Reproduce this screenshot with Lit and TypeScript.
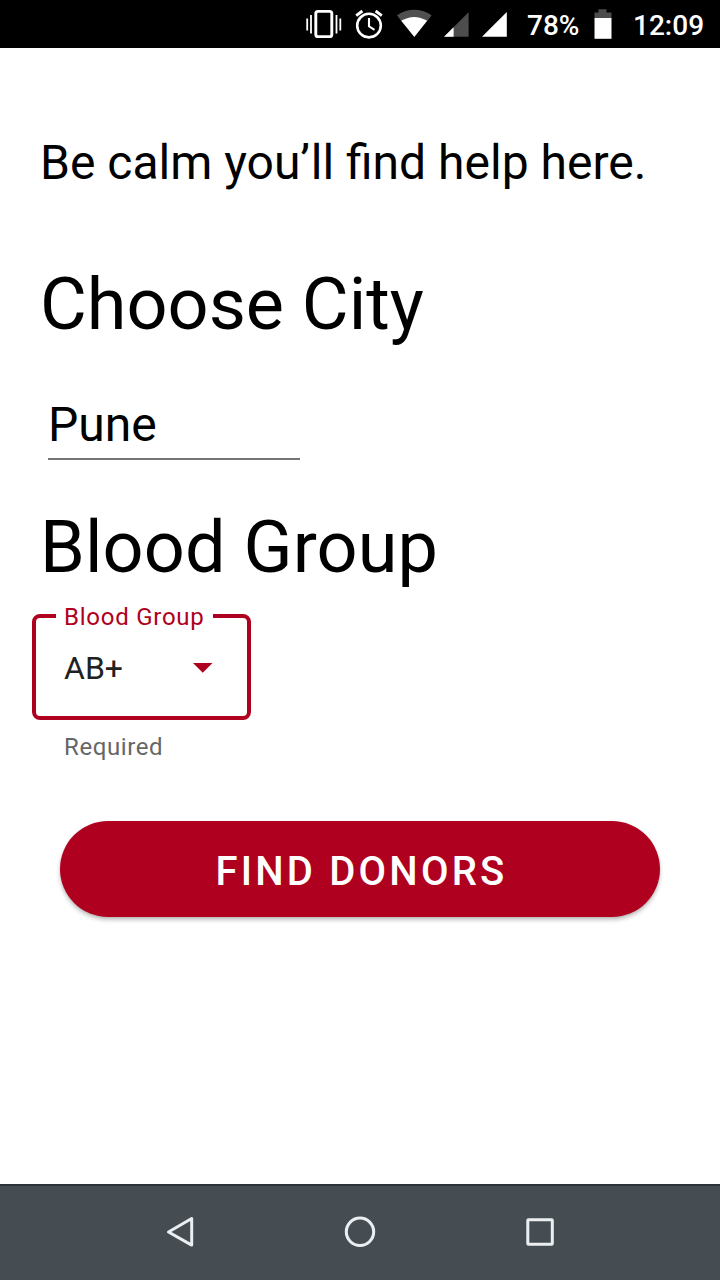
import { LitElement, html, css } from "lit";
import { customElement, property } from "lit/decorators.js";

@customElement("status-bar")
class StatusBar extends LitElement {
  static styles = css`
    :host { display: block; height: 48px; background: #000; }
    .bar { display: flex; height: 48px; align-items: center; justify-content: flex-end; padding-right: 16px; color: #fff; }
    .icons { width: 210px; height: 48px; margin-right: 17px; flex: none; }
    .battery { width: 18px; height: 48px; margin: 0 21px 0 15px; flex: none; }
    .text { font-size: 28px; font-weight: 500; line-height: 46px; padding-top: 3px; white-space: nowrap; }
    .level { width: 52px; }
    .clock { width: 71px; }
  `;
  render() {
    return html`<div class="bar">
      <svg class="icons" viewBox="300 0 210 48" fill="#fff">
        <g fill="none" stroke="#fff">
          <rect x="315.8" y="11.4" width="16" height="25.2" rx="2.2" stroke-width="2.9" />
          <path d="M311 15v18.500M336.500 15v18.500" stroke-width="1.800" />
          <path d="M307.200 18.500v12M340.300 18.500v12" stroke-width="1.800" />
          <circle cx="369" cy="25.6" r="11.800" stroke-width="2.600" />
          <path d="M369 18v8.300l5.500 3.600" stroke-width="2.100" />
          <path d="M356.200 15.600l6.200-4.600M381.800 15.600l-6.200-4.600" stroke-width="2.900" />
        </g>
        <path d="M397 15.200q17.300-10.800 34.600 0l-4.400 6q-13-7.600-25.800 0z" fill="#4f4f4f" />
        <path d="M401.200 20.800q13-7.800 26 0L414.300 37z" />
        <path d="M444 36.800L468.600 12.200v24.600z" fill="#4d4d4d" />
        <path d="M444 36.800l9.600-9.600v9.600z" />
        <path d="M482 36.800L506.800 12v24.800z" />
      </svg>
      <span class="text level">78%</span>
      <svg class="battery" viewBox="594 0 18 48">
        <path d="M594.500 18v-5.500h4V9.300h8v3.200h5V18z" fill="#4d4d4d" />
        <path d="M594.500 18h17v20.800h-17z" fill="#fff" />
      </svg>
      <span class="text clock">12:09</span>
    </div>`;
  }
}

@customElement("outlined-select")
class OutlinedSelect extends LitElement {
  @property() label = "";
  @property() value = "";
  @property() helper = "";
  static styles = css`
    :host { display: block; }
    .box { width: 219px; height: 118px; box-sizing: border-box; margin: 0; padding: 0 20px 0 20px;
      border: 4px solid #b00020; border-radius: 8px; min-width: 0; }
    .label { margin-left: 0; padding: 0 8px; height: 28px; font-size: 24px; line-height: 30px;
      letter-spacing: 0.75px; color: #b00020; white-space: nowrap; width: 141px; }
    .row { display: flex; align-items: center; justify-content: space-between; padding: 0 14px 0 8px; height: 76px; }
    .value { font-size: 32px; line-height: 40px; color: #212121; }
    .arrow { width: 20px; height: 10px; }
    .helper { padding-left: 32px; margin-top: 11px; font-size: 24px; line-height: 32px; letter-spacing: 0.6px; color: #666; }
  `;
  render() {
    return html`<fieldset class="box">
        <legend class="label">${this.label}</legend>
        <div class="row">
          <span class="value">${this.value}</span>
          <svg class="arrow" viewBox="0 0 20 10"><path d="M0 0h19.500L9.750 9.750z" fill="#b00020" /></svg>
        </div>
      </fieldset>
      <div class="helper">${this.helper}</div>`;
  }
}

@customElement("nav-bar")
class NavBar extends LitElement {
  static styles = css`
    :host { display: block; }
    .bar { display: flex; justify-content: center; align-items: center; gap: 140px; height: 96px;
      box-sizing: border-box; border-top: 2px solid #2d3338; background: #454d53; }
    .icon { width: 40px; height: 40px; fill: none; stroke: #eceff1; stroke-width: 3; }
  `;
  render() {
    return html`<div class="bar">
      <svg class="icon" viewBox="160 1213 40 40"><path d="M191.700 1218.500v26.600L168.500 1232z" stroke-linejoin="round" /></svg>
      <svg class="icon" viewBox="340 1213 40 40"><circle cx="360" cy="1231.800" r="13.700" /></svg>
      <svg class="icon" viewBox="520 1213 40 40"><rect x="527.800" y="1219.800" width="24.500" height="24.500" rx=".7" /></svg>
    </div>`;
  }
}

@customElement("app-root")
class AppRoot extends LitElement {
  static styles = css`
    :host { display: flex; flex-direction: column; width: 720px; height: 1280px; overflow: hidden;
      background: #fff; color: #000; font-family: Roboto, sans-serif; }
    .content { flex: 1; display: flex; flex-direction: column; padding-top: 87px; }
    .lead { margin: 0 40px; font-size: 48px; line-height: 56px; font-weight: 400; white-space: nowrap; }
    .heading { margin: 72px 40px 0; font-size: 72px; line-height: 84px; font-weight: 400; white-space: nowrap; }
    .city { width: 252px; box-sizing: border-box; height: 63px; margin: 50px 0 0 48px; font-size: 48px; line-height: 56px; border-bottom: 2px solid #757575; }
    .group { margin-top: 46px; letter-spacing: 0.1px; }
    .select { margin: 12px 0 0 32px; }
    .find { width: 600px; height: 96px; margin: 58px 0 0 60px; border: 0; padding: 3px 0 0 3px; border-radius: 48px;
      background: #b00020; color: #fff; font: 500 40px/96px Roboto, sans-serif; letter-spacing: 3.2px;
      box-shadow: 0 3px 4px rgba(0, 0, 0, 0.24), 0 1px 2px rgba(0, 0, 0, 0.08); }
  `;
  render() {
    return html`<status-bar></status-bar>
      <main class="content">
        <p class="lead">Be calm you’ll find help here.</p>
        <h1 class="heading">Choose City</h1>
        <div class="city">Pune</div>
        <h1 class="heading group">Blood Group</h1>
        <outlined-select class="select" label="Blood Group" value="AB+" helper="Required"></outlined-select>
        <button class="find">FIND DONORS</button>
      </main>
      <nav-bar></nav-bar>`;
  }
}
